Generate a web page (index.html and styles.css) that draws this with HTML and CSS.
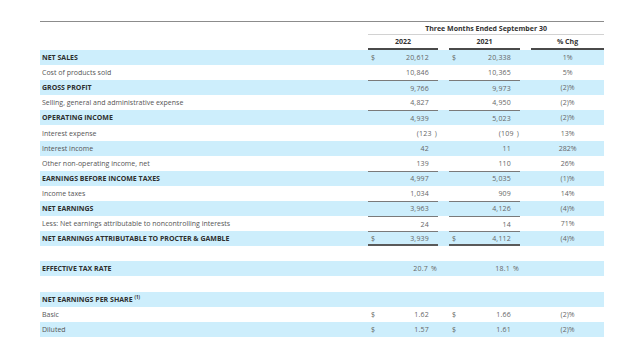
FILE: index.html
```html
<!DOCTYPE html>
<html lang="en">
<head>
    <meta charset="UTF-8">
    <title>Consolidated Earnings - Three Months Ended September 30</title>
    <link rel="stylesheet" href="styles.css">
</head>
<body>
    <div class="page">
        <table class="fin">
            <colgroup>
                <col class="c-label">
                <col class="c-num">
                <col class="c-gap">
                <col class="c-num2">
                <col class="c-gap">
                <col class="c-chg">
            </colgroup>
            <thead>
                <tr class="h-period">
                    <th></th>
                    <th colspan="5">Three Months Ended September 30</th>
                </tr>
                <tr class="h-years">
                    <th></th>
                    <th class="yr">2022</th>
                    <th></th>
                    <th class="yr">2021</th>
                    <th></th>
                    <th class="yr">% Chg</th>
                </tr>
            </thead>
            <tbody>
                <tr class="bold">
                    <td class="label">NET SALES</td>
                    <td class="num"><span class="cur">$</span>20,612</td>
                    <td></td>
                    <td class="num"><span class="cur">$</span>20,338</td>
                    <td></td>
                    <td class="chg">1%</td>
                </tr>
                <tr>
                    <td class="label">Cost of products sold</td>
                    <td class="num">10,846</td>
                    <td></td>
                    <td class="num">10,365</td>
                    <td></td>
                    <td class="chg">5%</td>
                </tr>
                <tr class="bold">
                    <td class="label">GROSS PROFIT</td>
                    <td class="num sub">9,766</td>
                    <td></td>
                    <td class="num sub">9,973</td>
                    <td></td>
                    <td class="chg">(2)%</td>
                </tr>
                <tr>
                    <td class="label">Selling, general and administrative expense</td>
                    <td class="num">4,827</td>
                    <td></td>
                    <td class="num">4,950</td>
                    <td></td>
                    <td class="chg">(2)%</td>
                </tr>
                <tr class="bold">
                    <td class="label">OPERATING INCOME</td>
                    <td class="num sub">4,939</td>
                    <td></td>
                    <td class="num sub">5,023</td>
                    <td></td>
                    <td class="chg">(2)%</td>
                </tr>
                <tr>
                    <td class="label">Interest expense</td>
                    <td class="num">(123<span class="sfx">)</span></td>
                    <td></td>
                    <td class="num">(109<span class="sfx">)</span></td>
                    <td></td>
                    <td class="chg">13%</td>
                </tr>
                <tr>
                    <td class="label">Interest income</td>
                    <td class="num">42</td>
                    <td></td>
                    <td class="num">11</td>
                    <td></td>
                    <td class="chg">282%</td>
                </tr>
                <tr>
                    <td class="label">Other non-operating income, net</td>
                    <td class="num">139</td>
                    <td></td>
                    <td class="num">110</td>
                    <td></td>
                    <td class="chg">26%</td>
                </tr>
                <tr class="bold">
                    <td class="label">EARNINGS BEFORE INCOME TAXES</td>
                    <td class="num sub">4,997</td>
                    <td></td>
                    <td class="num sub">5,035</td>
                    <td></td>
                    <td class="chg">(1)%</td>
                </tr>
                <tr>
                    <td class="label">Income taxes</td>
                    <td class="num">1,034</td>
                    <td></td>
                    <td class="num">909</td>
                    <td></td>
                    <td class="chg">14%</td>
                </tr>
                <tr class="bold">
                    <td class="label">NET EARNINGS</td>
                    <td class="num sub">3,963</td>
                    <td></td>
                    <td class="num sub">4,126</td>
                    <td></td>
                    <td class="chg">(4)%</td>
                </tr>
                <tr>
                    <td class="label">Less: Net earnings attributable to noncontrolling interests</td>
                    <td class="num sub">24</td>
                    <td></td>
                    <td class="num sub">14</td>
                    <td></td>
                    <td class="chg">71%</td>
                </tr>
                <tr class="bold">
                    <td class="label">NET EARNINGS ATTRIBUTABLE TO PROCTER &amp; GAMBLE</td>
                    <td class="num sub total"><span class="cur">$</span>3,939</td>
                    <td></td>
                    <td class="num sub total"><span class="cur">$</span>4,112</td>
                    <td></td>
                    <td class="chg">(4)%</td>
                </tr>
                <tr class="blank">
                    <td></td><td></td><td></td><td></td><td></td><td></td>
                </tr>
                <tr class="bold">
                    <td class="label">EFFECTIVE TAX RATE</td>
                    <td class="num">20.7<span class="sfx">%</span></td>
                    <td></td>
                    <td class="num">18.1<span class="sfx">%</span></td>
                    <td></td>
                    <td class="chg"></td>
                </tr>
                <tr class="blank">
                    <td></td><td></td><td></td><td></td><td></td><td></td>
                </tr>
                <tr class="bold">
                    <td class="label">NET EARNINGS PER SHARE <sup>(1)</sup></td>
                    <td class="num"></td>
                    <td></td>
                    <td class="num"></td>
                    <td></td>
                    <td class="chg"></td>
                </tr>
                <tr>
                    <td class="label">Basic</td>
                    <td class="num"><span class="cur">$</span>1.62</td>
                    <td></td>
                    <td class="num"><span class="cur">$</span>1.66</td>
                    <td></td>
                    <td class="chg">(2)%</td>
                </tr>
                <tr>
                    <td class="label">Diluted</td>
                    <td class="num"><span class="cur">$</span>1.57</td>
                    <td></td>
                    <td class="num"><span class="cur">$</span>1.61</td>
                    <td></td>
                    <td class="chg">(2)%</td>
                </tr>
            </tbody>
        </table>
    </div>
</body>
</html>
```

FILE: styles.css
```css
*, :after, :before {
    margin: 0;
    padding: 0;
    box-sizing: border-box;
}

body {
    background: #fff;
    font-family: 'Open Sans', 'DejaVu Sans', sans-serif;
    font-size: 7px;
    color: #555;
}

.page {
    padding: 21px 34px 0 40px;
}

.fin {
    width: 564px;
    border-collapse: separate;
    border-spacing: 0;
    table-layout: fixed;
}

.c-label { width: 328px; }
.c-num { width: 70px; }
.c-num2 { width: 71px; }
.c-gap { width: 11px; }
.c-chg { width: 73px; }

/* header */
.fin th {
    font-weight: 700;
    color: #333;
    text-align: center;
    line-height: 1;
}

.h-period th {
    height: 14px;
    border-top: 1px solid #8c8c8c;
}

.h-period th[colspan] {
    border-bottom: 1px solid #d2d2d2;
}

.h-years th {
    height: 15px;
}

.h-years th.yr {
    border-bottom: 2px solid #4a4a4a;
}

/* body rows */
.fin td {
    height: 15.1px;
    line-height: 1;
    vertical-align: middle;
    white-space: nowrap;
}

.fin tbody tr:nth-child(odd) td {
    background: #cdeefc;
}

.label {
    padding-left: 2px;
}

.bold .label {
    font-weight: 700;
    color: #2e2e2e;
}

.label sup {
    font-size: 4.4px;
    vertical-align: 3px;
}

.num {
    text-align: right;
    padding: 0 9px 0 3px;
    color: #666;
    letter-spacing: 0.2px;
}

.num .cur {
    float: left;
}

.num .sfx {
    margin-right: -8px;
    padding-left: 3px;
}

.num.sub {
    border-top: 1px solid #7a7a7a;
}

.num.total {
    border-bottom: 2px solid #5a5a5a;
}

.chg {
    text-align: center;
    color: #666;
}
```
